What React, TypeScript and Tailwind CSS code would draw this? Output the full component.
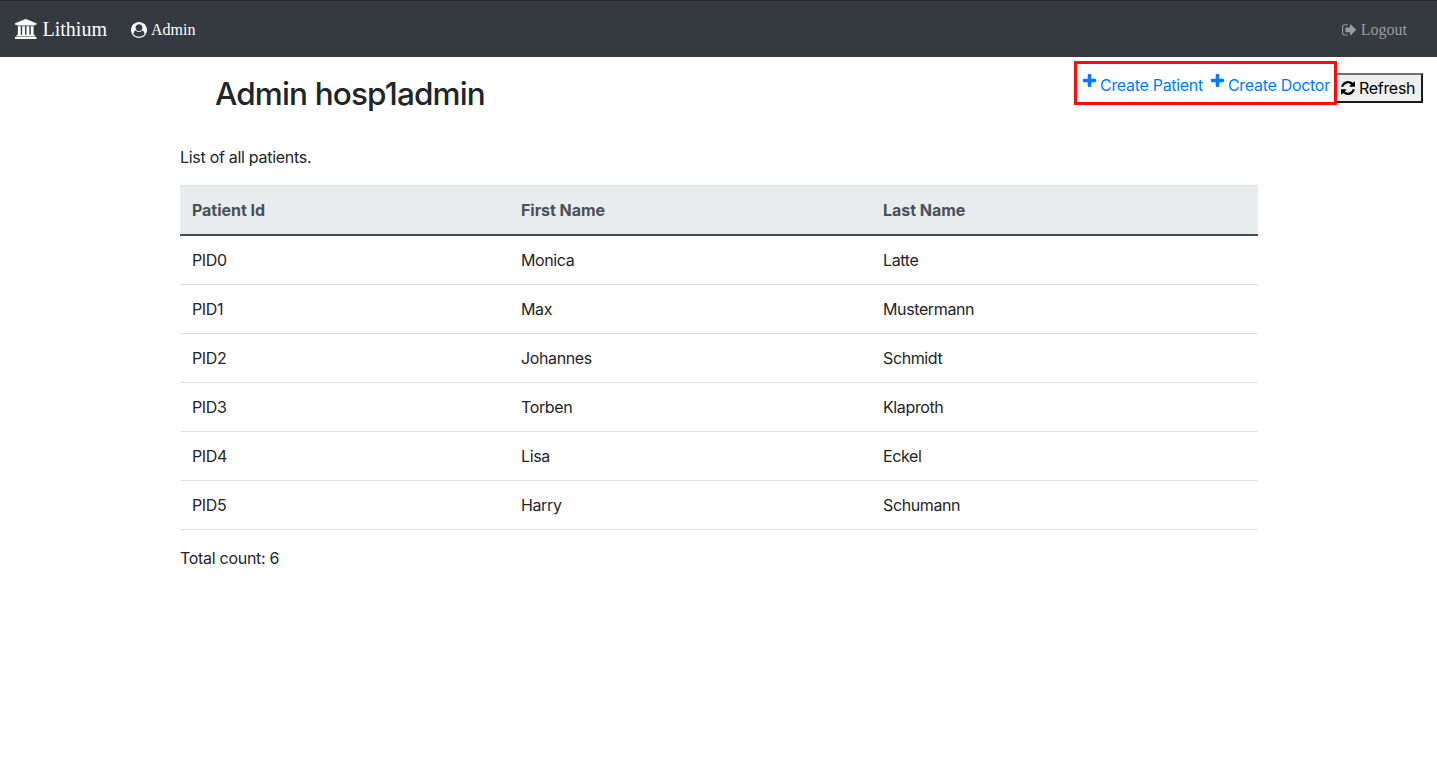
const ICONS = {
  university: {
    box: "0 0 1920 1792",
    d: "M960 0l960 384v128h-128q0 26-20.5 45t-48.5 19h-1526q-28 0-48.5-19t-20.5-45h-128v-128zM256 640h256v768h128v-768h256v768h128v-768h256v768h128v-768h256v768h59q28 0 48.5 19t20.5 45v64h-1664v-64q0-26 20.5-45t48.5-19h59v-768zM1851 1600q28 0 48.5 19t20.5 45v128h-1920v-128q0-26 20.5-45t48.5-19h1782z",
  },
  user: {
    box: "0 0 1792 1792",
    d: "M1523 1339q-22-155-87.5-257.5t-184.5-118.5q-67 74-159.5 115.5t-195.5 41.5-195.5-41.5-159.5-115.5q-119 16-184.5 118.5t-87.5 257.5q106 150 271 237.5t356 87.5 356-87.5 271-237.5zm-243-699q0-159-112.5-271.5t-271.5-112.5-271.5 112.5-112.5 271.5 112.5 271.5 271.5 112.5 271.5-112.5 112.5-271.5zm512 256q0 182-71 347.5t-190.5 286-285.5 191.5-349 71q-182 0-348-71t-286-191-191-286-71-348 71-348 191-286 286-191 348-71 348 71 286 191 191 286 71 348z",
  },
  signOut: {
    box: "64 128 1568 1536",
    d: "M704 1440q0 4 1 20t.5 26.5-3 23.5-10 19.5-20.5 6.5h-320q-119 0-203.5-84.5t-84.5-203.5v-704q0-119 84.5-203.5t203.5-84.5h320q13 0 22.5 9.5t9.5 22.5q0 4 1 20t.5 26.5-3 23.5-10 19.5-20.5 6.5h-320q-66 0-113 47t-47 113v704q0 66 47 113t113 47h312l11.5 1 11.5 3 8 5.5 7 9 2 13.5zm928-544q0 26-19 45l-544 544q-19 19-45 19t-45-19-19-45v-288h-448q-26 0-45-19t-19-45v-384q0-26 19-45t45-19h448v-288q0-26 19-45t45-19 45 19l544 544q19 19 19 45z",
  },
  plus: {
    box: "192 128 1408 1408",
    d: "M1600 736v192q0 40-28 68t-68 28h-416v416q0 40-28 68t-68 28h-192q-40 0-68-28t-28-68v-416h-416q-40 0-68-28t-28-68v-192q0-40 28-68t68-28h416v-416q0-40 28-68t68-28h192q40 0 68 28t28 68v416h416q40 0 68 28t28 68z",
  },
  refresh: {
    box: "128 128 1536 1536",
    d: "M1639 1056q0 5-1 7-64 268-268 434.5t-478 166.5q-146 0-282.5-55t-243.5-157l-129 129q-19 19-45 19t-45-19-19-45v-448q0-26 19-45t45-19h448q26 0 45 19t19 45-19 45l-137 137q71 66 161 102t187 36q134 0 250-65t186-179q11-17 53-117 8-23 30-23h192q13 0 22.5 9.5t9.5 22.5zm25-800v448q0 26-19 45t-45 19h-448q-26 0-45-19t-19-45 19-45l138-138q-148-137-349-137-134 0-250 65t-186 179q-11 17-53 117-8 23-30 23h-199q-13 0-22.5-9.5t-9.5-22.5v-7q65-268 270-434.5t480-166.5q146 0 284 55.5t245 156.5l130-129q19-19 45-19t45 19 19 45z",
  },
};

function Icon({ name, className }: { name: keyof typeof ICONS; className: string }) {
  return (
    <svg viewBox={ICONS[name].box} fill="currentColor" className={`shrink-0 ${className}`}>
      <path d={ICONS[name].d} />
    </svg>
  );
}

const patients = [
  ["PID0", "Monica", "Latte"],
  ["PID1", "Max", "Mustermann"],
  ["PID2", "Johannes", "Schmidt"],
  ["PID3", "Torben", "Klaproth"],
  ["PID4", "Lisa", "Eckel"],
  ["PID5", "Harry", "Schumann"],
];

export default function App() {
  return (
    <div className="min-h-screen bg-white font-['Inter',sans-serif] text-[16px] leading-6 text-[#212529]">
      <nav className="flex h-[57px] items-center border-t border-[#29282a] bg-[#343a40] pr-[30px] pl-[15px] font-['Liberation_Serif',serif] text-white">
        <a className="flex items-center text-[20px]">
          <Icon name="university" className="mr-[6px] h-5 w-[21.5px]" />
          Lithium
        </a>
        <a className="ml-6 flex items-center pt-px">
          <Icon name="user" className="mr-1 size-4" />
          Admin
        </a>
        <a className="ml-auto flex items-center pt-px text-[#999c9f]">
          <Icon name="signOut" className="mr-[5px] h-[13.7px] w-[14px]" />
          Logout
        </a>
      </nav>
      <div className="flex h-[88px] items-start justify-between pr-[14px] pl-[215px]">
        <h1 className="mt-[18px] text-[31.5px] leading-[38px] font-[550] tracking-[-0.85px]">Admin hosp1admin</h1>
        <div className="flex">
          <div className="z-10 mt-1 -mr-[3px] flex h-[44px] w-[263px] gap-2 border-3 border-[#fc0d07] pt-[9px] pl-[6px] tracking-[-0.3px] text-[#007bff]">
            <a className="flex whitespace-nowrap">
              <Icon name="plus" className="mt-px mr-1 size-[13px]" />
              Create Patient
            </a>
            <a className="flex whitespace-nowrap">
              <Icon name="plus" className="mt-px mr-1 size-[13px]" />
              Create Doctor
            </a>
          </div>
          <button className="mt-4 flex h-[30px] w-[89px] items-center border-2 border-t-[#6f6f6f] border-r-[#1a1a1a] border-b-[#1a1a1a] border-l-[#6f6f6f] bg-[#efefef] pl-[5px] tracking-[-0.3px] text-black">
            <Icon name="refresh" className="mr-1 size-[14px]" />
            Refresh
          </button>
        </div>
      </div>
      <main className="ml-[180px] w-[1078px] tracking-[-0.29px]">
        <p className="mb-4">List of all patients.</p>
        <table className="w-full table-fixed border-separate border-spacing-0 text-left">
          <colgroup>
            <col className="w-[329px]" />
            <col className="w-[362px]" />
            <col />
          </colgroup>
          <thead>
            <tr className="tracking-[-0.04px] text-[#495057]">
              {["Patient Id", "First Name", "Last Name"].map((h) => (
                <th key={h} className="h-[51px] border-t border-b-2 border-t-[#dee2e6] border-b-[#454d55] bg-[#e9ecef] px-3 py-0 font-bold">
                  {h}
                </th>
              ))}
            </tr>
          </thead>
          <tbody className="tracking-[-0.38px]">
            {patients.map((p) => (
              <tr key={p[0]}>
                {p.map((v) => (
                  <td key={v} className="h-[49px] border-b border-[#dee2e6] px-3 py-0">
                    {v}
                  </td>
                ))}
              </tr>
            ))}
          </tbody>
        </table>
        <p className="mt-4">Total count: 6</p>
      </main>
    </div>
  );
}
